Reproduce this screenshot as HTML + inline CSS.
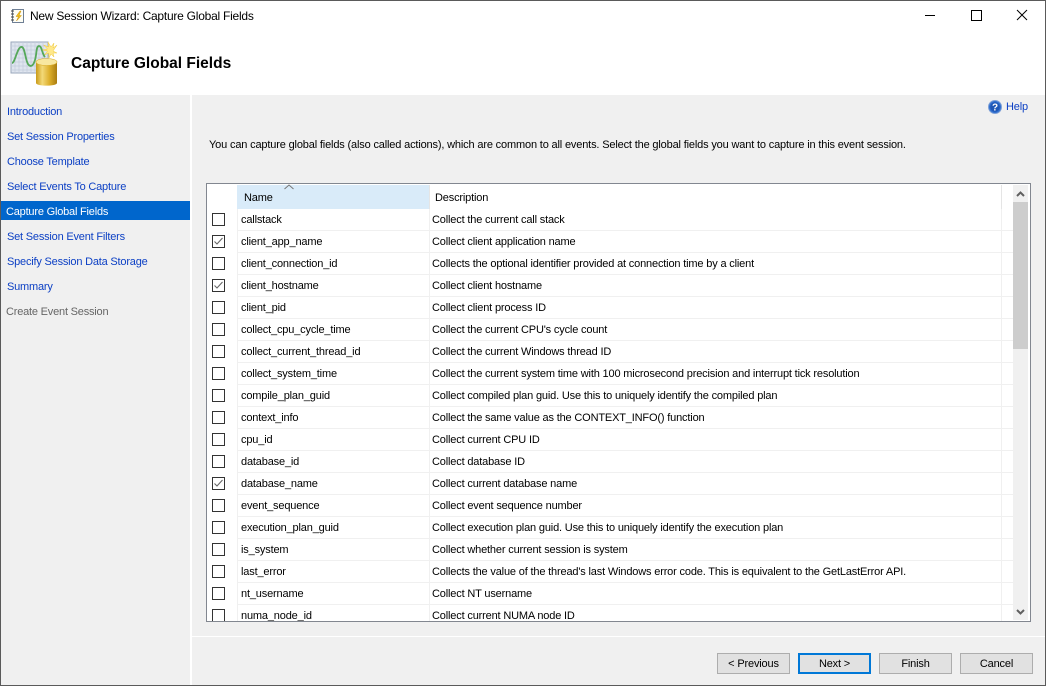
<!DOCTYPE html>
<html><head><meta charset="utf-8">
<style>
html,body{margin:0;padding:0;width:1046px;height:686px;overflow:hidden;background:#fff}
body{font-family:"Liberation Sans",sans-serif;font-size:11px;color:#000;position:relative;letter-spacing:-.165px}
div,span,svg{position:absolute;white-space:nowrap}
.s{left:7px;height:20px;line-height:20px;color:#0b3fc4;margin-top:2px;letter-spacing:-.2px}
.r{left:207px;width:794px;height:22px}
.l{left:31px;top:0;width:794px;height:21px;border-bottom:1px solid #f0f0f0}
.r .n{left:34px;top:1px;line-height:21px}
.r .d{left:225px;top:1px;line-height:21px}
.c{left:5px;top:4px;width:11px;height:11px;border:1px solid #333;background:#fff}
.c svg{left:0;top:0}
.b{top:653px;width:71px;height:19px;border:1px solid #adadad;background:#e1e1e1;text-align:center;line-height:21px}
</style></head><body>
<div style="left:0;top:0;width:1046px;height:686px;box-sizing:border-box;border:1px solid #5a5a5a;background:#fff"></div>

<svg style="left:10px;top:8px" width="16" height="16" viewBox="0 0 16 16"><rect x="2.500" y="1.500" width="11" height="13" fill="#fdfdf5" stroke="#6f7f95"/><path d="M1 3h3M1 6h3M1 9h3M1 12h3" stroke="#444" stroke-width="1"/><path d="M10 3L6 8.500h2.500L6.500 13l5-5.500H9L11 3z" fill="#f3c21a" stroke="#c98f10" stroke-width=".5"/></svg>
<div style="left:30px;top:6px;line-height:20px;font-size:12px;letter-spacing:-.24px">New Session Wizard: Capture Global Fields</div>
<svg style="left:925px;top:8px" width="112" height="16" viewBox="0 0 112 16"><path d="M0 7.500h10" stroke="#000"/><rect x="46.500" y="2.500" width="10" height="10" fill="none" stroke="#000"/><path d="M92 2l10 10M102 2L92 12" stroke="#000" fill="none"/></svg>

<svg style="left:10px;top:39px" width="50" height="50" viewBox="0 0 50 50">
<defs><linearGradient id="g" x1="0" x2="1" y1="0" y2="0"><stop offset="0" stop-color="#c99a18"/><stop offset=".3" stop-color="#f3d978"/><stop offset=".65" stop-color="#dcae2a"/><stop offset="1" stop-color="#a97c10"/></linearGradient></defs>
<rect x="1" y="3" width="37" height="31" fill="#dfe5ef" stroke="#9aa7bb"/>
<path d="M5 3v31M9 3v31M13 3v31M17 3v31M21 3v31M25 3v31M29 3v31M33 3v31M1 7h37M1 11h37M1 15h37M1 19h37M1 23h37M1 27h37M1 31h37" stroke="#c3ccdb" stroke-width=".7"/>
<path d="M2 24C5 24 7 9 11 8C15 7 15 20 18 25C20 28 23 28 25 21C27 14 26 7 29 7C32 7 32 15 35 18" fill="none" stroke="#55a85a" stroke-width="1.800"/>
<path d="M47 6l-4 3 1-5-3 4-3-5 .5 5-5-2 4 4-5 1 5 1-3 4 4-2 .5 5 2-4 3 3-1-4 4 0-4-2z" fill="#ffe88a" stroke="#f0c93a" stroke-width=".5"/>
<path d="M26 22v22c0 3.500 21 3.500 21 0V22z" fill="url(#g)"/>
<ellipse cx="36.500" cy="23" rx="10.500" ry="3.500" fill="#f8e7a0" stroke="#d9ad2c" stroke-width=".6"/>
</svg>
<div style="left:71px;top:53px;margin-top:1px;font-size:15.500px;font-weight:bold;line-height:20px;letter-spacing:0">Capture Global Fields</div>

<div style="left:1px;top:95px;width:189px;height:590px;background:#f0f0f0"></div>
<div style="left:192px;top:95px;width:853px;height:590px;background:#f0f0f0"></div>
<div style="left:192px;top:636px;width:853px;height:1px;background:#fff"></div>
<div style="left:0;top:685px;width:1046px;height:1px;background:#5a5a5a"></div>
<div style="left:0;top:95px;width:1px;height:591px;background:#5a5a5a"></div>
<div style="left:1045px;top:95px;width:1px;height:591px;background:#5a5a5a"></div>

<div class="s" style="top:100px">Introduction</div>
<div class="s" style="top:125px">Set Session Properties</div>
<div class="s" style="top:150px">Choose Template</div>
<div class="s" style="top:175px">Select Events To Capture</div>
<div style="left:1px;top:201px;width:189px;height:19px;background:#0066cc"></div>
<div class="s" style="left:6px;top:200px;color:#fff">Capture Global Fields</div>
<div class="s" style="top:225px">Set Session Event Filters</div>
<div class="s" style="top:250px">Specify Session Data Storage</div>
<div class="s" style="top:275px">Summary</div>
<div class="s" style="left:6px;top:300px;color:#666">Create Event Session</div>

<svg style="left:988px;top:100px" width="14" height="14" viewBox="0 0 14 14"><circle cx="7" cy="7" r="6.500" fill="#2f6fd0" stroke="#7d9fd6"/><circle cx="7" cy="7" r="4.800" fill="#1f57b5"/><text x="7" y="10.500" font-size="10" font-weight="bold" fill="#fff" text-anchor="middle" font-family="Liberation Sans">?</text></svg>
<div style="left:1006px;top:97px;line-height:20px;color:#0b3fc4">Help</div>

<div style="left:209px;top:135px;line-height:20px;letter-spacing:-.16px">You can capture global fields (also called actions), which are common to all events. Select the global fields you want to capture in this event session.</div>

<div style="left:206px;top:183px;width:823px;height:437px;border:1px solid #828790;background:#fff"></div>
<div style="left:237px;top:185px;width:192px;height:24px;background:#d9ebf9"></div>
<div style="left:429px;top:185px;width:1px;height:24px;background:#e5e5e5"></div>
<div style="left:1001px;top:185px;width:1px;height:24px;background:#e5e5e5"></div>
<svg style="left:284px;top:184px" width="10" height="6" viewBox="0 0 10 6"><path d="M.5 5L5 1l4.500 4" fill="none" stroke="#777"/></svg>
<div style="left:244px;top:188px;line-height:20px">Name</div>
<div style="left:435px;top:188px;line-height:20px">Description</div>

<div style="left:207px;top:209px;width:806px;height:412px;overflow:hidden">
<div style="left:30px;top:0;width:1px;height:412px;background:#f0f0f0"></div>
<div style="left:222px;top:0;width:1px;height:412px;background:#f0f0f0"></div>
<div style="left:794px;top:0;width:1px;height:412px;background:#f0f0f0"></div>
</div>

<div style="left:207px;top:209px;width:806px;height:412px;overflow:hidden">
<div class="r" style="left:0;top:0"><div class="l"></div><div class="c"></div><div class="n">callstack</div><div class="d">Collect the current call stack</div></div>
<div class="r" style="left:0;top:22px"><div class="l"></div><div class="c"><svg width="11" height="11" viewBox="0 0 11 11"><path d="M1.500 5.500L4 8l5.500-6" fill="none" stroke="#666" stroke-width="1.100"/></svg></div><div class="n">client_app_name</div><div class="d">Collect client application name</div></div>
<div class="r" style="left:0;top:44px"><div class="l"></div><div class="c"></div><div class="n">client_connection_id</div><div class="d">Collects the optional identifier provided at connection time by a client</div></div>
<div class="r" style="left:0;top:66px"><div class="l"></div><div class="c"><svg width="11" height="11" viewBox="0 0 11 11"><path d="M1.500 5.500L4 8l5.500-6" fill="none" stroke="#666" stroke-width="1.100"/></svg></div><div class="n">client_hostname</div><div class="d">Collect client hostname</div></div>
<div class="r" style="left:0;top:88px"><div class="l"></div><div class="c"></div><div class="n">client_pid</div><div class="d">Collect client process ID</div></div>
<div class="r" style="left:0;top:110px"><div class="l"></div><div class="c"></div><div class="n">collect_cpu_cycle_time</div><div class="d">Collect the current CPU's cycle count</div></div>
<div class="r" style="left:0;top:132px"><div class="l"></div><div class="c"></div><div class="n">collect_current_thread_id</div><div class="d">Collect the current Windows thread ID</div></div>
<div class="r" style="left:0;top:154px"><div class="l"></div><div class="c"></div><div class="n">collect_system_time</div><div class="d">Collect the current system time with 100 microsecond precision and interrupt tick resolution</div></div>
<div class="r" style="left:0;top:176px"><div class="l"></div><div class="c"></div><div class="n">compile_plan_guid</div><div class="d">Collect compiled plan guid. Use this to uniquely identify the compiled plan</div></div>
<div class="r" style="left:0;top:198px"><div class="l"></div><div class="c"></div><div class="n">context_info</div><div class="d">Collect the same value as the CONTEXT_INFO() function</div></div>
<div class="r" style="left:0;top:220px"><div class="l"></div><div class="c"></div><div class="n">cpu_id</div><div class="d">Collect current CPU ID</div></div>
<div class="r" style="left:0;top:242px"><div class="l"></div><div class="c"></div><div class="n">database_id</div><div class="d">Collect database ID</div></div>
<div class="r" style="left:0;top:264px"><div class="l"></div><div class="c"><svg width="11" height="11" viewBox="0 0 11 11"><path d="M1.500 5.500L4 8l5.500-6" fill="none" stroke="#666" stroke-width="1.100"/></svg></div><div class="n">database_name</div><div class="d">Collect current database name</div></div>
<div class="r" style="left:0;top:286px"><div class="l"></div><div class="c"></div><div class="n">event_sequence</div><div class="d">Collect event sequence number</div></div>
<div class="r" style="left:0;top:308px"><div class="l"></div><div class="c"></div><div class="n">execution_plan_guid</div><div class="d">Collect execution plan guid. Use this to uniquely identify the execution plan</div></div>
<div class="r" style="left:0;top:330px"><div class="l"></div><div class="c"></div><div class="n">is_system</div><div class="d">Collect whether current session is system</div></div>
<div class="r" style="left:0;top:352px"><div class="l"></div><div class="c"></div><div class="n">last_error</div><div class="d">Collects the value of the thread's last Windows error code. This is equivalent to the GetLastError API.</div></div>
<div class="r" style="left:0;top:374px"><div class="l"></div><div class="c"></div><div class="n">nt_username</div><div class="d">Collect NT username</div></div>
<div class="r" style="left:0;top:396px"><div class="l"></div><div class="c"></div><div class="n">numa_node_id</div><div class="d">Collect current NUMA node ID</div></div>
</div>

<div style="left:1013px;top:185px;width:15px;height:435px;background:#f0f0f0"></div>
<div style="left:1013px;top:202px;width:15px;height:147px;background:#cdcdcd"></div>
<svg style="left:1013px;top:185px" width="15" height="17" viewBox="0 0 15 17"><path d="M4 11l3.500-3.500L11 11" fill="none" stroke="#606060" stroke-width="2"/></svg>
<svg style="left:1013px;top:604px" width="15" height="17" viewBox="0 0 15 17"><path d="M4 6l3.500 3.500L11 6" fill="none" stroke="#606060" stroke-width="2"/></svg>

<div class="b" style="left:717px">&lt; Previous</div>
<div class="b" style="left:798px;width:69px;height:17px;line-height:19px;border:2px solid #0078d7">Next &gt;</div>
<div class="b" style="left:879px">Finish</div>
<div class="b" style="left:960px">Cancel</div>
</body></html>
